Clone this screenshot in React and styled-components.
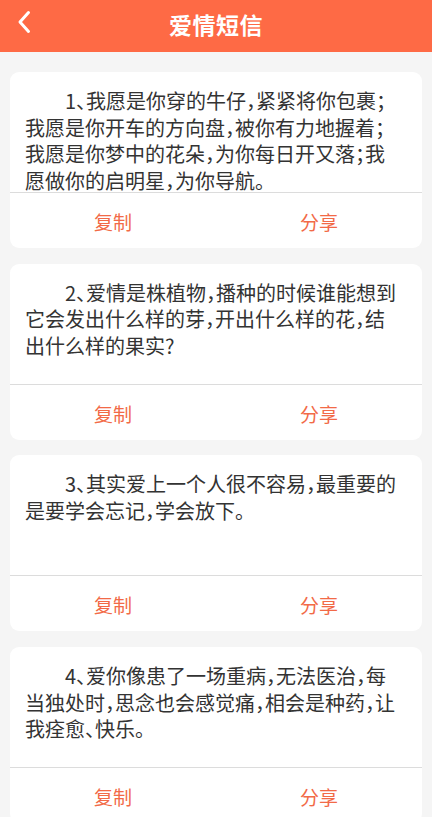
import React from "react";
import styled, { createGlobalStyle } from "styled-components";

const GlobalStyle = createGlobalStyle`
  html, body {
    margin: 0;
    padding: 0;
    background-color: #f5f5f5;
    font-family: "Noto Sans CJK SC", "Noto Sans", sans-serif;
  }
`;

const Page = styled.div`
  min-height: 817px;
  background-color: #f5f5f5;
`;

const Header = styled.header`
  position: relative;
  height: 52px;
  background-color: #fe6a45;
  display: flex;
  align-items: center;
  justify-content: center;
`;

const BackButton = styled.button`
  position: absolute;
  left: 10px;
  top: 8px;
  width: 28px;
  height: 28px;
  padding: 0;
  border: none;
  background: none;
  display: flex;
  align-items: center;
  justify-content: center;
`;

const Title = styled.h1`
  margin: 0 0 4px;
  color: #fff;
  font-size: 23px;
  font-weight: 700;
  letter-spacing: 0.5px;
`;

const List = styled.div`
  display: flex;
  flex-direction: column;
  gap: 15.7px;
  padding: 20px 10px;
`;

const Card = styled.div`
  background-color: #fff;
  border-radius: 9px;
  overflow: hidden;
`;

const Content = styled.p`
  box-sizing: border-box;
  height: 121px;
  margin: 0;
  padding: 16px 21px 0 15px;
  color: #333;
  font-size: 20px;
  line-height: 26.7px;
  text-indent: 2em;
  font-feature-settings: "halt";
  border-bottom: 1px solid #dcdcdc;
`;

const Actions = styled.div`
  display: grid;
  grid-template-columns: 1fr 1fr;
  height: 55px;
`;

const ActionButton = styled.button`
  border: none;
  background: none;
  padding: 2px 0 0;
  color: #f26a47;
  font-family: inherit;
  font-size: 19px;
`;

const messages = [
  "1、我愿是你穿的牛仔，紧紧将你包裹；我愿是你开车的方向盘，被你有力地握着；我愿是你梦中的花朵，为你每日开又落；我愿做你的启明星，为你导航。",
  "2、爱情是株植物，播种的时候谁能想到它会发出什么样的芽，开出什么样的花，结出什么样的果实?",
  "3、其实爱上一个人很不容易，最重要的是要学会忘记，学会放下。",
  "4、爱你像患了一场重病，无法医治，每当独处时，思念也会感觉痛，相会是种药，让我痊愈、快乐。",
];

export default function App() {
  return (
    <Page>
      <GlobalStyle />
      <Header>
        <BackButton aria-label="返回">
          <svg width="14" height="24" viewBox="0 0 14 24">
            <path
              d="M11.5 2.5 L3 12 L11.5 21.5"
              fill="none"
              stroke="#fff"
              strokeWidth="3"
              strokeLinecap="round"
              strokeLinejoin="round"
            />
          </svg>
        </BackButton>
        <Title>爱情短信</Title>
      </Header>
      <List>
        {messages.map((text) => (
          <Card key={text}>
            <Content>{text}</Content>
            <Actions>
              <ActionButton>复制</ActionButton>
              <ActionButton>分享</ActionButton>
            </Actions>
          </Card>
        ))}
      </List>
    </Page>
  );
}
